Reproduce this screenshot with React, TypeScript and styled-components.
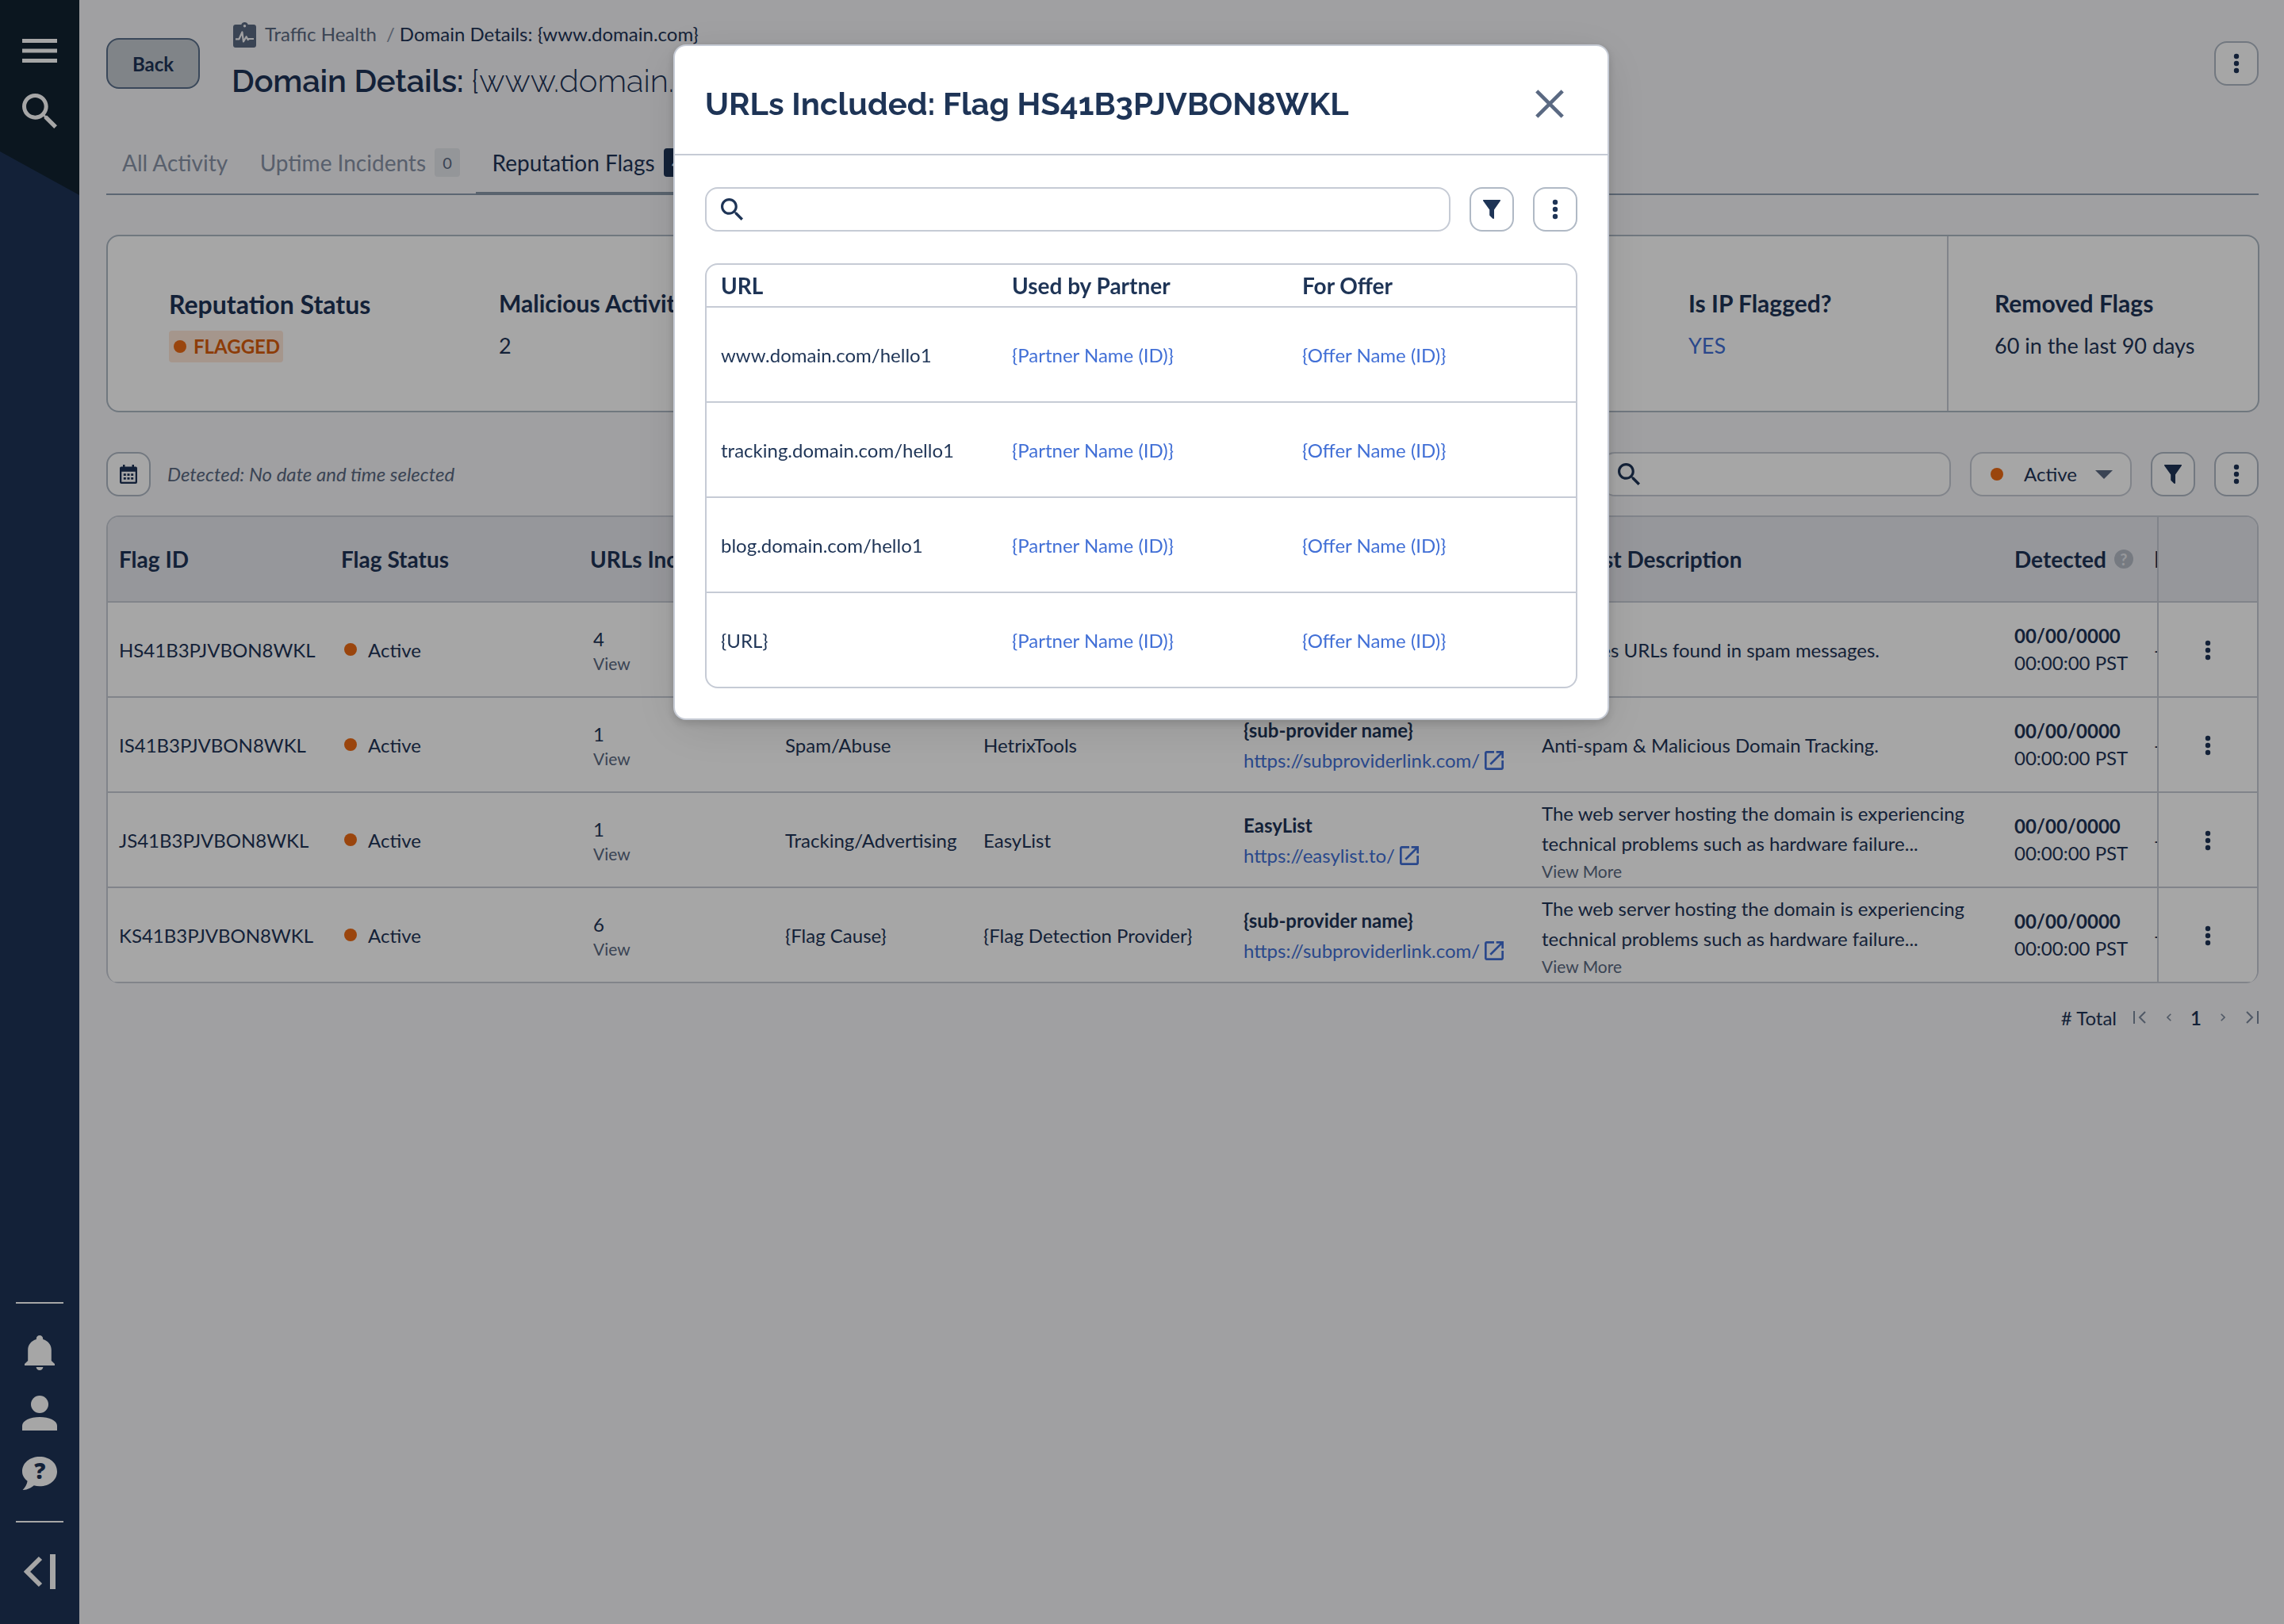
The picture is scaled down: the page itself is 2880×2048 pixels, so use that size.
import React from "react";
import styled, { createGlobalStyle } from "styled-components";

const c = {
  navy: "#1e3456",
  navyDark: "#112231",
  ink: "#1e3456",
  muted: "#5a6982",
  tab: "#8793a7",
  link: "#416fd6",
  line: "#c6cbd5",
  lineDark: "#b0b9c5",
  page: "#f6f6f9",
  head: "#e7e8ee",
  orange: "#ed6b14",
};

const GlobalStyle = createGlobalStyle`
  *, *::before, *::after { box-sizing: border-box; }
  html, body { margin: 0; padding: 0; }
  body {
    background: ${c.page};
    color: ${c.ink};
    font-family: "Lato", "Open Sans", sans-serif;
    font-size: 24px;
  }
`;

/* ---------- shell ---------- */

const Shell = styled.div`
  display: flex;
  width: 2880px;
  height: 2048px;
  overflow: hidden;
`;

const Sidebar = styled.nav`
  flex: none;
  width: 100px;
  display: flex;
  flex-direction: column;
  justify-content: space-between;
  align-items: center;
  color: #fff;
  background: ${c.navy};
`;

const SidebarTop = styled.div`
  width: 100%;
  height: 246px;
  padding-top: 49px;
  display: flex;
  flex-direction: column;
  align-items: center;
  gap: 39px;
  background: ${c.navyDark};
  clip-path: polygon(0 0, 100% 0, 100% 100%, 0 77.6%);
`;

const SidebarBottom = styled.div`
  display: flex;
  flex-direction: column;
  align-items: center;
  padding-bottom: 44px;
`;

const SidebarRule = styled.hr`
  width: 60px;
  height: 2px;
  margin: 0;
  border: 0;
  background: #fff;
`;

const SidebarIcons = styled.div`
  display: flex;
  flex-direction: column;
  align-items: center;
  gap: 32px;
  padding: 40px 0 38px;
`;

const CollapseSlot = styled.div`
  display: flex;
  padding-top: 40px;
`;

const Main = styled.main`
  flex: 1;
  min-width: 0;
  padding: 28px 32px 0 34px;
`;

/* ---------- page header ---------- */

const PageHeader = styled.header`
  display: flex;
  align-items: flex-start;
  height: 136px;
`;

const BackButton = styled.button`
  width: 118px;
  height: 64px;
  margin: 20px 40px 0 0;
  padding: 1px 0 0;
  border: 2px solid #5a6f8a;
  border-radius: 16px;
  background: #c5cbd2;
  color: ${c.ink};
  font: 700 24px "Lato", sans-serif;
`;

const HeaderText = styled.div`
  flex: 1;
`;

const Crumbs = styled.div`
  display: flex;
  align-items: center;
  height: 32px;
  padding-left: 2px;
  line-height: 30px;
  white-space: pre;

  & > span {
    padding-bottom: 2px;
  }
`;

const CrumbLink = styled.span`
  margin-left: 11px;
  color: ${c.muted};
`;

const CrumbSlash = styled.span`
  margin: 0 6px 0 12px;
  color: ${c.tab};
`;

const Title = styled.h1`
  margin: 18px 0 0;
  font: 600 40px/48px "Raleway", "Lato", sans-serif;
  letter-spacing: -0.2px;
`;

const TitleLight = styled.span`
  font-weight: 300;
  letter-spacing: 0;
`;

const IconButton = styled.button<{ $top?: number }>`
  flex: none;
  display: flex;
  align-items: center;
  justify-content: center;
  width: 56px;
  height: 56px;
  margin: ${(p) => p.$top ?? 0}px 0 0;
  padding: 0;
  border: 2px solid ${c.lineDark};
  border-radius: 16px;
  background: #fff;
  color: ${c.ink};
`;

/* ---------- tabs ---------- */

const Tabs = styled.div`
  display: flex;
  height: 82px;
  border-bottom: 2px solid #8e9db1;
`;

const Tab = styled.div<{ $active?: boolean }>`
  display: flex;
  align-items: center;
  gap: 11px;
  height: 82px;
  padding: 4px 20px ${(p) => (p.$active ? 0 : 4)}px;
  border-bottom: ${(p) => (p.$active ? "4px solid #8999a9" : "0")};
  color: ${(p) => (p.$active ? c.ink : c.tab)};
  font-size: 28px;

  & + & {
    padding-left: 20.5px;
  }
`;

const TabCount = styled.span<{ $active?: boolean }>`
  display: flex;
  align-items: center;
  justify-content: center;
  width: 32px;
  height: 36px;
  border-radius: 4px;
  background: ${(p) => (p.$active ? c.navy : "#e4e6ec")};
  color: ${(p) => (p.$active ? "#fff" : c.muted)};
  font-size: 20px;
`;

/* ---------- summary ---------- */

const Summary = styled.section`
  display: grid;
  grid-template-columns: 416px 416px 1084px 403px 1fr;
  height: 224px;
  margin: 50px -1px 0 0;
  border: 2px solid #adb8c4;
  border-radius: 16px;
  background: #fff;
`;

const SummaryCell = styled.div<{ $divided?: boolean; $plain?: boolean }>`
  display: flex;
  flex-direction: column;
  justify-content: center;
  gap: 8px;
  padding-left: ${(p) => (p.$divided ? 58 : 77)}px;
  padding-bottom: ${(p) => (p.$plain ? 2 : 0)}px;
  border-left: ${(p) => (p.$divided ? `2px solid ${c.line}` : "0")};
  white-space: nowrap;
`;

const SummaryTitle = styled.h2<{ $large?: boolean }>`
  margin: 0;
  font-size: ${(p) => (p.$large ? 32 : 30)}px;
  line-height: ${(p) => (p.$large ? 49 : 48)}px;
  font-weight: 700;
`;

const SummaryValue = styled.div<{ $link?: boolean }>`
  display: flex;
  align-items: center;
  height: 42px;
  font-size: 27px;
  color: ${(p) => (p.$link ? c.link : c.ink)};
`;

const FlaggedBadge = styled.span`
  display: flex;
  align-items: center;
  gap: 9px;
  height: 40px;
  padding: 0 4px 0 6px;
  border-radius: 4px;
  background: #fde7d8;
  color: #d95c0c;
  font-size: 24px;
  font-weight: 700;
`;

const Dot = styled.i`
  flex: none;
  width: 16px;
  height: 16px;
  border-radius: 50%;
  background: ${c.orange};
`;

/* ---------- controls ---------- */

const Controls = styled.div`
  display: flex;
  align-items: center;
  gap: 24px;
  margin: 50px 0 24px;
`;

const DateNote = styled.em`
  flex: 1;
  margin-left: -3px;
  padding-bottom: 1px;
  color: ${c.muted};
`;

const SearchBox = styled.div<{ $width: number }>`
  display: flex;
  align-items: center;
  width: ${(p) => p.$width}px;
  height: 56px;
  padding-left: 18px;
  border: 2px solid ${c.line};
  border-radius: 16px;
  background: #fff;
`;

const StatusSelect = styled.div`
  display: flex;
  align-items: center;
  width: 204px;
  height: 56px;
  padding: 0 22px 0 24px;
  border: 2px solid ${c.line};
  border-radius: 16px;
  background: #fff;
`;

const StatusLabel = styled.span`
  flex: 1;
  padding: 0 0 2px 26px;
`;

/* ---------- flags table ---------- */

const FlagTable = styled.section`
  display: flex;
  border: 2px solid ${c.line};
  border-bottom: 0;
  border-radius: 16px;
  overflow: hidden;
  background: #fff;
`;

const FlagColumns = styled.div`
  width: 2584px;
  overflow: hidden;
`;

const rowGrid = "280px 314px 246px 250px 328px 376px 596px 176px 60px";

const FlagHead = styled.div`
  display: grid;
  grid-template-columns: ${rowGrid};
  align-items: center;
  width: 2640px;
  height: 108px;
  padding-left: 14px;
  border-bottom: 2px solid ${c.line};
  background: ${c.head};
  font-size: 28px;
  font-weight: 700;
  white-space: nowrap;
`;

const FlagRow = styled.div`
  display: grid;
  grid-template-columns: ${rowGrid};
  align-items: center;
  width: 2640px;
  height: 120px;
  padding-left: 14px;
  border-bottom: 2px solid ${c.line};
  white-space: nowrap;
`;

const DescriptionHead = styled.span`
  margin-left: -4px;
`;

const ActionColumn = styled.div`
  flex: 1;
  border-left: 2px solid ${c.line};
`;

const ActionCell = styled.div<{ $head?: boolean }>`
  display: flex;
  align-items: center;
  justify-content: center;
  height: ${(p) => (p.$head ? 108 : 120)}px;
  padding-top: 2px;
  border-bottom: 2px solid ${c.line};
  background: ${(p) => (p.$head ? c.head : "#fff")};
`;

const StatusCell = styled.div`
  display: flex;
  align-items: center;
  gap: 14px;
  padding-left: 4px;
`;

const CountCell = styled.div`
  padding-left: 4px;
  line-height: 36px;
`;

const SmallLink = styled.div<{ $more?: boolean }>`
  margin-top: ${(p) => (p.$more ? 2 : -1)}px;
  color: ${c.muted};
  font-size: 21px;
  line-height: ${(p) => (p.$more ? 28 : 27)}px;
`;

const SourceCell = styled.div`
  padding-top: 2px;
  line-height: 38px;
`;

const Strong = styled.div`
  font-weight: 700;
`;

const SourceLink = styled.div`
  display: flex;
  align-items: center;
  gap: 2px;
  height: 38px;
  color: ${c.link};
`;

const DescriptionCell = styled.div<{ $shift: number }>`
  margin-left: ${(p) => p.$shift}px;
  padding-top: 2px;
  line-height: 38px;
  white-space: pre;
`;

const DateCell = styled.div`
  line-height: 34px;
`;

const DetectedHead = styled.div`
  display: flex;
  align-items: center;
  gap: 10px;
`;

const HelpMark = styled.span`
  display: flex;
  align-items: center;
  justify-content: center;
  width: 24px;
  height: 24px;
  border-radius: 50%;
  background: #b5bcc7;
  color: ${c.head};
  font-size: 20px;
  line-height: 24px;
`;

/* ---------- pagination ---------- */

const Pager = styled.div`
  display: flex;
  align-items: center;
  justify-content: flex-end;
  height: 40px;
  margin-top: 23px;
  color: #7c899d;
`;

const PagerTotal = styled.span`
  margin-right: 21px;
  color: ${c.ink};
`;

const PagerPage = styled.span`
  width: 14px;
  margin: 0 24px;
  padding-top: 1px;
  color: ${c.ink};
  font-weight: 600;
`;

const PagerGap = styled.span`
  width: 26px;
`;

/* ---------- modal ---------- */

const Overlay = styled.div`
  position: fixed;
  inset: 0;
  display: flex;
  align-items: flex-start;
  justify-content: center;
  padding: 56px 2px 0 0;
  background: rgba(0, 0, 0, 0.35);
`;

const Modal = styled.div`
  width: 1180px;
  border: 2px solid ${c.line};
  border-radius: 16px;
  background: #fff;
  box-shadow: 0 4px 12px rgba(0, 0, 0, 0.16), 0 12px 60px rgba(0, 0, 0, 0.1);
`;

const ModalHeader = styled.div`
  display: flex;
  align-items: center;
  justify-content: space-between;
  height: 138px;
  padding: 10px 55px 0 38px;
  border-bottom: 2px solid ${c.line};
  color: ${c.muted};
`;

const ModalTitle = styled.h2`
  margin: 0;
  color: ${c.ink};
  font: 700 40px/48px "Raleway", "Lato", sans-serif;
`;

const ModalBody = styled.div`
  padding: 40px 38px 38px;
`;

const ModalControls = styled.div`
  display: flex;
  gap: 24px;
  margin-bottom: 40px;
`;

const UrlTable = styled.div`
  border: 2px solid ${c.line};
  border-radius: 16px;
`;

const UrlRow = styled.div<{ $head?: boolean }>`
  display: grid;
  grid-template-columns: 367px 366px 1fr;
  align-items: center;
  height: ${(p) => (p.$head ? 54 : 120)}px;
  padding-left: 18px;
  border-bottom: 2px solid ${c.line};
  font-size: ${(p) => (p.$head ? 28 : 24)}px;
  font-weight: ${(p) => (p.$head ? 700 : 400)};

  &:last-child {
    height: 118px;
    border-bottom: 0;
  }
`;

const UrlLink = styled.span`
  color: ${c.link};
`;

/* ---------- icons ---------- */

const MenuIcon = () => (
  <svg width="44" height="30" viewBox="0 0 44 30" fill="currentColor">
    <path d="M0 0h44v5H0zM0 12.5h44v5H0zM0 25h44v5H0z" />
  </svg>
);

const SearchIcon = ({ size }: { size: number }) => (
  <svg width={size} height={size} viewBox="3 3 17.49 17.49" fill="currentColor">
    <path d="M15.5 14h-.79l-.28-.27C15.41 12.59 16 11.11 16 9.5 16 5.91 13.09 3 9.5 3S3 5.91 3 9.5 5.91 16 9.5 16c1.61 0 3.09-.59 4.23-1.57l.27.28v.79l5 4.99L20.49 19l-4.99-5zm-6 0C7.01 14 5 11.99 5 9.5S7.01 5 9.5 5 14 7.01 14 9.5 11.99 14 9.5 14z" />
  </svg>
);

const BellIcon = () => (
  <svg width="38" height="44" viewBox="0 0 38 44" fill="currentColor">
    <path d="M19 0c2.400 0 4.200 1.900 4.200 4.300v.8C29.500 6.800 33.800 12 33.800 18.500V32l4.200 4v2H0v-2l4.200-4V18.500C4.200 12 8.500 6.800 14.800 5.100v-.8C14.800 1.900 16.600 0 19 0z" />
    <path d="M14.600 40h8.800c-.4 2.500-2.100 4-4.400 4s-4-1.500-4.400-4z" />
  </svg>
);

const PersonIcon = () => (
  <svg width="44" height="44" viewBox="0 0 44 44" fill="currentColor">
    <circle cx="22" cy="11" r="11" />
    <path d="M0 44v-6c0-6.500 10-11 22-11s22 4.500 22 11v6z" />
  </svg>
);

const SupportIcon = () => (
  <svg width="44" height="44" viewBox="0 0 44 44">
    <path
      fill="currentColor"
      d="M22 1c12.500 0 22 8 22 18.700S34.500 38.300 22 38.300c-2.600 0-5-.3-7.200-1C11.500 40 6.500 43.200.6 43c3-3 5.500-7 6-11.200C2.500 28.600 0 24.400 0 19.700 0 9 9.500 1 22 1z"
    />
    <text x="22.300" y="29" textAnchor="middle" fontFamily="Open Sans" fontSize="28" fontWeight="800" fill={c.navy}>
      ?
    </text>
  </svg>
);

const CollapseIcon = () => (
  <svg width="40" height="44" viewBox="0 0 40 44">
    <path d="M21 5L4 22l17 17" fill="none" stroke="currentColor" strokeWidth="6" />
    <path d="M33 0h7v44h-7z" fill="currentColor" />
  </svg>
);

const HealthIcon = () => (
  <svg width="29" height="32" viewBox="0 0 29 32">
    <path
      fill={c.muted}
      fillRule="evenodd"
      d="M3 3h7.300C10.900 1.200 12.500 0 14.500 0s3.600 1.200 4.200 3H26c1.700 0 3 1.300 3 3v23c0 1.700-1.300 3-3 3H3c-1.700 0-3-1.300-3-3V6c0-1.700 1.300-3 3-3zm11.500 0a1.700 1.700 0 100 3.400 1.700 1.700 0 000-3.400z"
    />
    <path d="M3 21.300h4.500l3.900-8.800L13 24.500l3.600-6.300 2 3.800 1.400-1h6" fill="none" stroke={c.page} strokeWidth="2.200" strokeLinejoin="round" />
  </svg>
);

const KebabIcon = () => (
  <svg width="8" height="26" viewBox="0 0 8 26" fill="currentColor">
    <circle cx="4" cy="4" r="3.200" />
    <circle cx="4" cy="13" r="3.200" />
    <circle cx="4" cy="22" r="3.200" />
  </svg>
);

const FilterIcon = () => (
  <svg width="22" height="24" viewBox="0 0 22 24" fill="currentColor">
    <path d="M.6 0h20.800c.6 0 .8.700.5 1.200L14 12.600V23c0 .9-.9 1.300-1.600.7l-3.600-3.500c-.4-.4-.6-.8-.6-1.300v-6.300L.1 1.200C-.2.700 0 0 .6 0z" />
  </svg>
);

const CalendarIcon = () => (
  <svg width="22" height="24" viewBox="0 0 22 24">
    <path d="M4 0h2.500v2.500h9V0H18v2.500h2A2 2 0 0122 4.500V22a2 2 0 01-2 2H2a2 2 0 01-2-2V4.500a2 2 0 012-2h2z" fill={c.ink} />
    <path d="M2.300 8.800h17.400v12.900H2.300z" fill="#fff" />
    <path d="M4.800 11.200h3v2.800h-3zM9.500 11.200h3v2.800h-3zM14.200 11.200h3v2.800h-3zM4.800 16h3v2.800h-3zM9.500 16h3v2.800h-3zM14.200 16h3v2.800h-3z" fill={c.ink} />
  </svg>
);

const CaretIcon = () => (
  <svg width="22" height="11" viewBox="0 0 22 11" fill={c.muted}>
    <path d="M0 0h22L11 11z" />
  </svg>
);

const ExternalIcon = () => (
  <svg width="32" height="32" viewBox="0 0 24 24" fill="currentColor">
    <path d="M19 19H5V5h7V3H5c-1.110 0-2 .9-2 2v14c0 1.100.89 2 2 2h14c1.100 0 2-.9 2-2v-7h-2v7zM14 3v2h3.590l-9.830 9.830 1.410 1.410L19 6.410V10h2V3h-7z" />
  </svg>
);

const CloseIcon = () => (
  <svg width="36" height="36" viewBox="0 0 36 36">
    <path d="M1.800 1.800l32.400 32.400M34.200 1.800L1.800 34.200" stroke="currentColor" strokeWidth="4.600" />
  </svg>
);

const EdgeIcon = ({ flip }: { flip?: boolean }) => (
  <svg width="16" height="16" viewBox="0 0 16 16" fill="none" stroke="currentColor" strokeWidth="2">
    {flip ? <path d="M1 1l7 7-7 7M15 0v16" /> : <path d="M15 1L8 8l7 7M1 0v16" />}
  </svg>
);

const StepIcon = ({ flip }: { flip?: boolean }) => (
  <svg width="6" height="10" viewBox="0 0 6 10" fill="none" stroke="currentColor" strokeWidth="1.600">
    <path d={flip ? "M.7.7L5 5 .7 9.300" : "M5.300.7L1 5l4.300 4.300"} />
  </svg>
);

/* ---------- data ---------- */

type Flag = {
  id: string;
  urls: number;
  cause: string;
  provider: string;
  source?: { name: string; url: string };
  description: string;
  more?: boolean;
};

const longText = "The web server hosting the domain is experiencing\ntechnical problems such as hardware failure...";

const flags: Flag[] = [
  { id: "HS41B3PJVBON8WKL", urls: 4, cause: "", provider: "", description: "Publishes URLs found in spam messages." },
  {
    id: "IS41B3PJVBON8WKL",
    urls: 1,
    cause: "Spam/Abuse",
    provider: "HetrixTools",
    source: { name: "{sub-provider name}", url: "https://subproviderlink.com/" },
    description: "Anti-spam & Malicious Domain Tracking.",
  },
  {
    id: "JS41B3PJVBON8WKL",
    urls: 1,
    cause: "Tracking/Advertising",
    provider: "EasyList",
    source: { name: "EasyList", url: "https://easylist.to/" },
    description: longText,
    more: true,
  },
  {
    id: "KS41B3PJVBON8WKL",
    urls: 6,
    cause: "{Flag Cause}",
    provider: "{Flag Detection Provider}",
    source: { name: "{sub-provider name}", url: "https://subproviderlink.com/" },
    description: longText,
    more: true,
  },
];

const urls = ["www.domain.com/hello1", "tracking.domain.com/hello1", "blog.domain.com/hello1", "{URL}"];

export default function App() {
  return (
    <>
      <GlobalStyle />
      <Shell>
        <Sidebar>
          <SidebarTop>
            <MenuIcon />
            <SearchIcon size={44} />
          </SidebarTop>
          <SidebarBottom>
            <SidebarRule />
            <SidebarIcons>
              <BellIcon />
              <PersonIcon />
              <SupportIcon />
            </SidebarIcons>
            <SidebarRule />
            <CollapseSlot>
              <CollapseIcon />
            </CollapseSlot>
          </SidebarBottom>
        </Sidebar>

        <Main>
          <PageHeader>
            <BackButton>Back</BackButton>
            <HeaderText>
              <Crumbs>
                <HealthIcon />
                <CrumbLink>Traffic Health</CrumbLink>
                <CrumbSlash>/</CrumbSlash>
                <span>{"Domain Details: {www.domain.com}"}</span>
              </Crumbs>
              <Title>
                Domain Details: <TitleLight>{"{www.domain.com}"}</TitleLight>
              </Title>
            </HeaderText>
            <IconButton $top={24}>
              <KebabIcon />
            </IconButton>
          </PageHeader>

          <Tabs>
            <Tab>All Activity</Tab>
            <Tab>
              Uptime Incidents <TabCount>0</TabCount>
            </Tab>
            <Tab $active>
              Reputation Flags <TabCount $active>4</TabCount>
            </Tab>
          </Tabs>

          <Summary>
            <SummaryCell>
              <SummaryTitle $large>Reputation Status</SummaryTitle>
              <SummaryValue>
                <FlaggedBadge>
                  <Dot />
                  FLAGGED
                </FlaggedBadge>
              </SummaryValue>
            </SummaryCell>
            <SummaryCell $plain>
              <SummaryTitle>Malicious Activity</SummaryTitle>
              <SummaryValue>2</SummaryValue>
            </SummaryCell>
            <SummaryCell />
            <SummaryCell $plain>
              <SummaryTitle>Is IP Flagged?</SummaryTitle>
              <SummaryValue $link>YES</SummaryValue>
            </SummaryCell>
            <SummaryCell $plain $divided>
              <SummaryTitle>Removed Flags</SummaryTitle>
              <SummaryValue>60 in the last 90 days</SummaryValue>
            </SummaryCell>
          </Summary>

          <Controls>
            <IconButton>
              <CalendarIcon />
            </IconButton>
            <DateNote>Detected: No date and time selected</DateNote>
            <SearchBox $width={440}>
              <SearchIcon size={28} />
            </SearchBox>
            <StatusSelect>
              <Dot />
              <StatusLabel>Active</StatusLabel>
              <CaretIcon />
            </StatusSelect>
            <IconButton>
              <FilterIcon />
            </IconButton>
            <IconButton>
              <KebabIcon />
            </IconButton>
          </Controls>

          <FlagTable>
            <FlagColumns>
              <FlagHead>
                <span>Flag ID</span>
                <span>Flag Status</span>
                <span>URLs Included</span>
                <span />
                <span />
                <span />
                <DescriptionHead>Blacklist Description</DescriptionHead>
                <DetectedHead>
                  Detected <HelpMark>?</HelpMark>
                </DetectedHead>
                <span>Removed</span>
              </FlagHead>
              {flags.map((f) => (
                <FlagRow key={f.id}>
                  <span>{f.id}</span>
                  <StatusCell>
                    <Dot />
                    Active
                  </StatusCell>
                  <CountCell>
                    {f.urls}
                    <SmallLink>View</SmallLink>
                  </CountCell>
                  <span>{f.cause}</span>
                  <span>{f.provider}</span>
                  <SourceCell>
                    {f.source && (
                      <>
                        <Strong>{f.source.name}</Strong>
                        <SourceLink>
                          {f.source.url}
                          <ExternalIcon />
                        </SourceLink>
                      </>
                    )}
                  </SourceCell>
                  <DescriptionCell $shift={f.source ? 0 : -2}>
                    {f.description}
                    {f.more && <SmallLink $more>View More</SmallLink>}
                  </DescriptionCell>
                  <DateCell>
                    <Strong>00/00/0000</Strong>
                    00:00:00 PST
                  </DateCell>
                  <span>--</span>
                </FlagRow>
              ))}
            </FlagColumns>
            <ActionColumn>
              <ActionCell $head />
              {flags.map((f) => (
                <ActionCell key={f.id}>
                  <KebabIcon />
                </ActionCell>
              ))}
            </ActionColumn>
          </FlagTable>

          <Pager>
            <PagerTotal># Total</PagerTotal>
            <EdgeIcon />
            <PagerGap />
            <StepIcon />
            <PagerPage>1</PagerPage>
            <StepIcon flip />
            <PagerGap />
            <EdgeIcon flip />
          </Pager>
        </Main>
      </Shell>

      <Overlay>
        <Modal>
          <ModalHeader>
            <ModalTitle>URLs Included: Flag HS41B3PJVBON8WKL</ModalTitle>
            <CloseIcon />
          </ModalHeader>
          <ModalBody>
            <ModalControls>
              <SearchBox $width={940}>
                <SearchIcon size={28} />
              </SearchBox>
              <IconButton>
                <FilterIcon />
              </IconButton>
              <IconButton>
                <KebabIcon />
              </IconButton>
            </ModalControls>
            <UrlTable>
              <UrlRow $head>
                <span>URL</span>
                <span>Used by Partner</span>
                <span>For Offer</span>
              </UrlRow>
              {urls.map((u) => (
                <UrlRow key={u}>
                  <span>{u}</span>
                  <UrlLink>{"{Partner Name (ID)}"}</UrlLink>
                  <UrlLink>{"{Offer Name (ID)}"}</UrlLink>
                </UrlRow>
              ))}
            </UrlTable>
          </ModalBody>
        </Modal>
      </Overlay>
    </>
  );
}
